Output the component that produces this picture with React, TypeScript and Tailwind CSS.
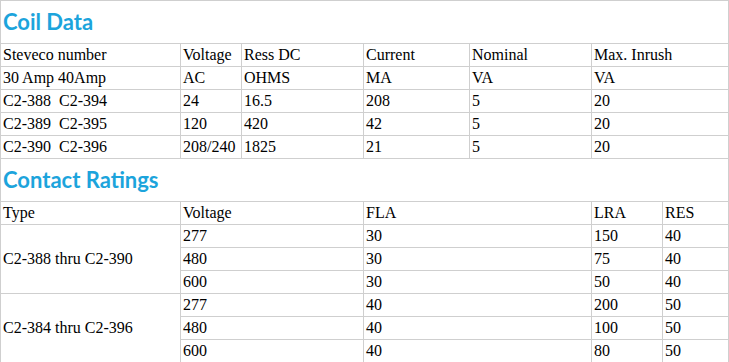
const cell =
  "border border-[#cfcfcf] px-[2px] py-0 h-[23px] leading-[22px] text-left text-[16px] font-normal align-middle whitespace-nowrap font-['Liberation_Serif','Times_New_Roman',serif]";
const head =
  "border border-[#cfcfcf] px-[2px] pt-[6px] pb-0 h-[43px] text-left align-top text-[22px] leading-[30px] font-bold text-[#1ca4dc] font-['Lato','Open_Sans',sans-serif]";

const coilRows = [
  ['Steveco number', 'Voltage', 'Ress DC', 'Current', 'Nominal', 'Max. Inrush'],
  ['30 Amp 40Amp', 'AC', 'OHMS', 'MA', 'VA', 'VA'],
  ['C2-388\u00a0 C2-394', '24', '16.5', '208', '5', '20'],
  ['C2-389\u00a0 C2-395', '120', '420', '42', '5', '20'],
  ['C2-390\u00a0 C2-396', '208/240', '1825', '21', '5', '20'],
];

const contactGroups = [
  {
    type: 'C2-388 thru C2-390',
    rows: [
      ['277', '30', '150', '40'],
      ['480', '30', '75', '40'],
      ['600', '30', '50', '40'],
    ],
  },
  {
    type: 'C2-384 thru C2-396',
    rows: [
      ['277', '40', '200', '50'],
      ['480', '40', '100', '50'],
      ['600', '40', '80', '50'],
    ],
  },
];

export default function App() {
  return (
    <div className="min-h-screen bg-white text-black">
      <table className="w-[728px] table-fixed border-collapse">
        <colgroup>
          <col className="w-[180px]" />
          <col className="w-[61px]" />
          <col className="w-[122px]" />
          <col className="w-[106px]" />
          <col className="w-[122px]" />
          <col className="w-[71px]" />
          <col className="w-[66px]" />
        </colgroup>
        <tbody>
          <tr>
            <td colSpan={7} className={head}>
              Coil Data
            </td>
          </tr>
          {coilRows.map((r, i) => (
            <tr key={i}>
              {r.map((v, j) => (
                <td key={j} colSpan={j === 5 ? 2 : 1} className={cell}>
                  {v}
                </td>
              ))}
            </tr>
          ))}
          <tr>
            <td colSpan={7} className={head}>
              Contact Ratings
            </td>
          </tr>
          <tr>
            <td className={cell}>Type</td>
            <td colSpan={2} className={cell}>Voltage</td>
            <td colSpan={2} className={cell}>FLA</td>
            <td className={cell}>LRA</td>
            <td className={cell}>RES</td>
          </tr>
          {contactGroups.map((g) =>
            g.rows.map((r, i) => (
              <tr key={g.type + i}>
                {i === 0 && (
                  <td rowSpan={3} className={cell}>
                    {g.type}
                  </td>
                )}
                <td colSpan={2} className={cell}>{r[0]}</td>
                <td colSpan={2} className={cell}>{r[1]}</td>
                <td className={cell}>{r[2]}</td>
                <td className={cell}>{r[3]}</td>
              </tr>
            ))
          )}
        </tbody>
      </table>
    </div>
  );
}
